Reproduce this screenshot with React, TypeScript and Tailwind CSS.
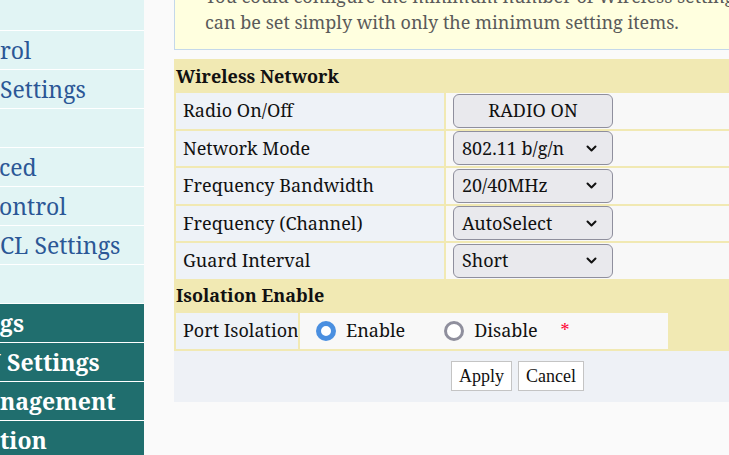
import { ReactElement } from "react";

const SERIF = "font-['Noto_Serif','DejaVu_Serif',serif]";

interface MenuItem {
  label: string;
  shift: number;
  dark?: boolean;
}

const MENU_ITEMS: MenuItem[] = [
  { label: "", shift: 0 },
  { label: "rol", shift: 0 },
  { label: "Settings", shift: 0 },
  { label: "", shift: 0 },
  { label: "ced", shift: -1 },
  { label: "ontrol", shift: -1 },
  { label: "CL Settings", shift: 0 },
  { label: "", shift: 0 },
  { label: "gs", shift: 0, dark: true },
  { label: "N Settings", shift: -17, dark: true },
  { label: "nagement", shift: 0, dark: true },
  { label: "tion", shift: 0, dark: true },
];

const WIRELESS_ROWS = [
  { label: "Radio On/Off", value: "RADIO ON", button: true },
  { label: "Network Mode", value: "802.11 b/g/n" },
  { label: "Frequency Bandwidth", value: "20/40MHz" },
  { label: "Frequency (Channel)", value: "AutoSelect" },
  { label: "Guard Interval", value: "Short" },
];

function Chevron(): ReactElement {
  return (
    <svg width="11" height="7" viewBox="0 0 11 7" className="shrink-0">
      <path d="M1.5 1.5 5.5 5.5l4-4" fill="none" stroke="#111" strokeWidth="2" strokeLinecap="round" strokeLinejoin="round" />
    </svg>
  );
}

function Sidebar(): ReactElement {
  return (
    <aside className={`w-[144px] shrink-0 overflow-hidden bg-[#e1f4f4] ${SERIF}`}>
      <ul className="-mt-[8px] flex flex-col">
        {MENU_ITEMS.map((item, i) => (
          <li
            key={i}
            className={`h-[39px] border-b border-white flex items-center whitespace-nowrap text-[23px] ${
              item.dark ? "bg-[#206e6e] text-white font-bold" : "text-[#2b5796]"
            }`}
          >
            <span style={{ marginLeft: item.shift }}>{item.label}</span>
          </li>
        ))}
      </ul>
    </aside>
  );
}

function WirelessRow({ label, value, button }: { label: string; value: string; button?: boolean }): ReactElement {
  return (
    <div className="flex gap-[2px] h-[35.5px]">
      <div className="w-[268px] shrink-0 bg-[#eef2f7] flex items-center pl-[7px] text-[18px] text-[#111]">{label}</div>
      <div className="flex-1 bg-[#f8f8f8] flex items-center pl-[7px]">
        {button ? (
          <div className="w-[160px] h-[34px] rounded-[6px] border border-[#8f8f9d] bg-[#e9e9ed] flex items-center justify-center text-[18px] text-[#111]">
            {value}
          </div>
        ) : (
          <div className="w-[160px] h-[34px] rounded-[6px] border border-[#8f8f9d] bg-[#e9e9ed] flex items-center justify-between pl-[8px] pr-[15px] text-[18px] text-[#111]">
            <span>{value}</span>
            <Chevron />
          </div>
        )}
      </div>
    </div>
  );
}

function RadioDot({ checked }: { checked?: boolean }): ReactElement {
  return checked ? (
    <span className="w-[20px] h-[20px] rounded-full border-[5px] border-[#4a8fe0] bg-white" />
  ) : (
    <span className="w-[20px] h-[20px] rounded-full border-[3px] border-[#8f8f9d] bg-white" />
  );
}

export default function App(): ReactElement {
  return (
    <div className="flex w-[729px] h-[455px] overflow-hidden bg-[#fafafa]">
      <Sidebar />
      <main className={`flex-1 pl-[30px] overflow-hidden ${SERIF}`}>
        <div className="w-[620px] -mt-[20px] border border-[#c4d8ea] bg-[#ffffdf] pl-[30px] pt-[2px] pb-[14px] text-[18px] leading-[26px] text-[#5a5a5a] whitespace-nowrap">
          <p>You could configure the minimum number of Wireless settings for communication</p>
          <p>can be set simply with only the minimum setting items.</p>
        </div>

        <div className="w-[620px] mt-[9px] bg-[#f1e9b3] flex flex-col">
          <div className="h-[34px] flex items-center pl-[2px] font-bold text-[18px] text-[#111]">Wireless Network</div>
          <div className="flex flex-col gap-[2px] pl-[2px]">
            {WIRELESS_ROWS.map((row) => (
              <WirelessRow key={row.label} {...row} />
            ))}
          </div>
          <div className="h-[34px] flex items-center pl-[2px] font-bold text-[18px] text-[#111]">Isolation Enable</div>
          <div className="flex pl-[2px] pb-[2px]">
            <div className="flex gap-[2px] h-[36px]">
              <div className="w-[122px] bg-[#eef2f7] flex items-center pl-[7px] text-[18px] text-[#111] whitespace-nowrap overflow-hidden">Port Isolation</div>
              <div className="w-[368px] bg-[#f8f8f8] flex items-center pl-[16px] text-[18px] text-[#111]">
                <label className="flex items-center gap-[10px]">
                  <RadioDot checked />
                  Enable
                </label>
                <label className="flex items-center gap-[10px] ml-[39px]">
                  <RadioDot />
                  Disable
                </label>
                <span className="ml-[23px] text-[#ff0033]">*</span>
              </div>
            </div>
          </div>
        </div>
        <div className="w-[620px] h-[51px] bg-[#eef1f6] flex items-center pl-[277px] gap-[6px] font-['Liberation_Serif',serif] text-[18px] text-[#111]">
          <button className="h-[30px] px-[7px] bg-white border border-[#c4c4c4]">Apply</button>
          <button className="h-[30px] px-[7px] bg-white border border-[#c4c4c4]">Cancel</button>
        </div>
      </main>
    </div>
  );
}
